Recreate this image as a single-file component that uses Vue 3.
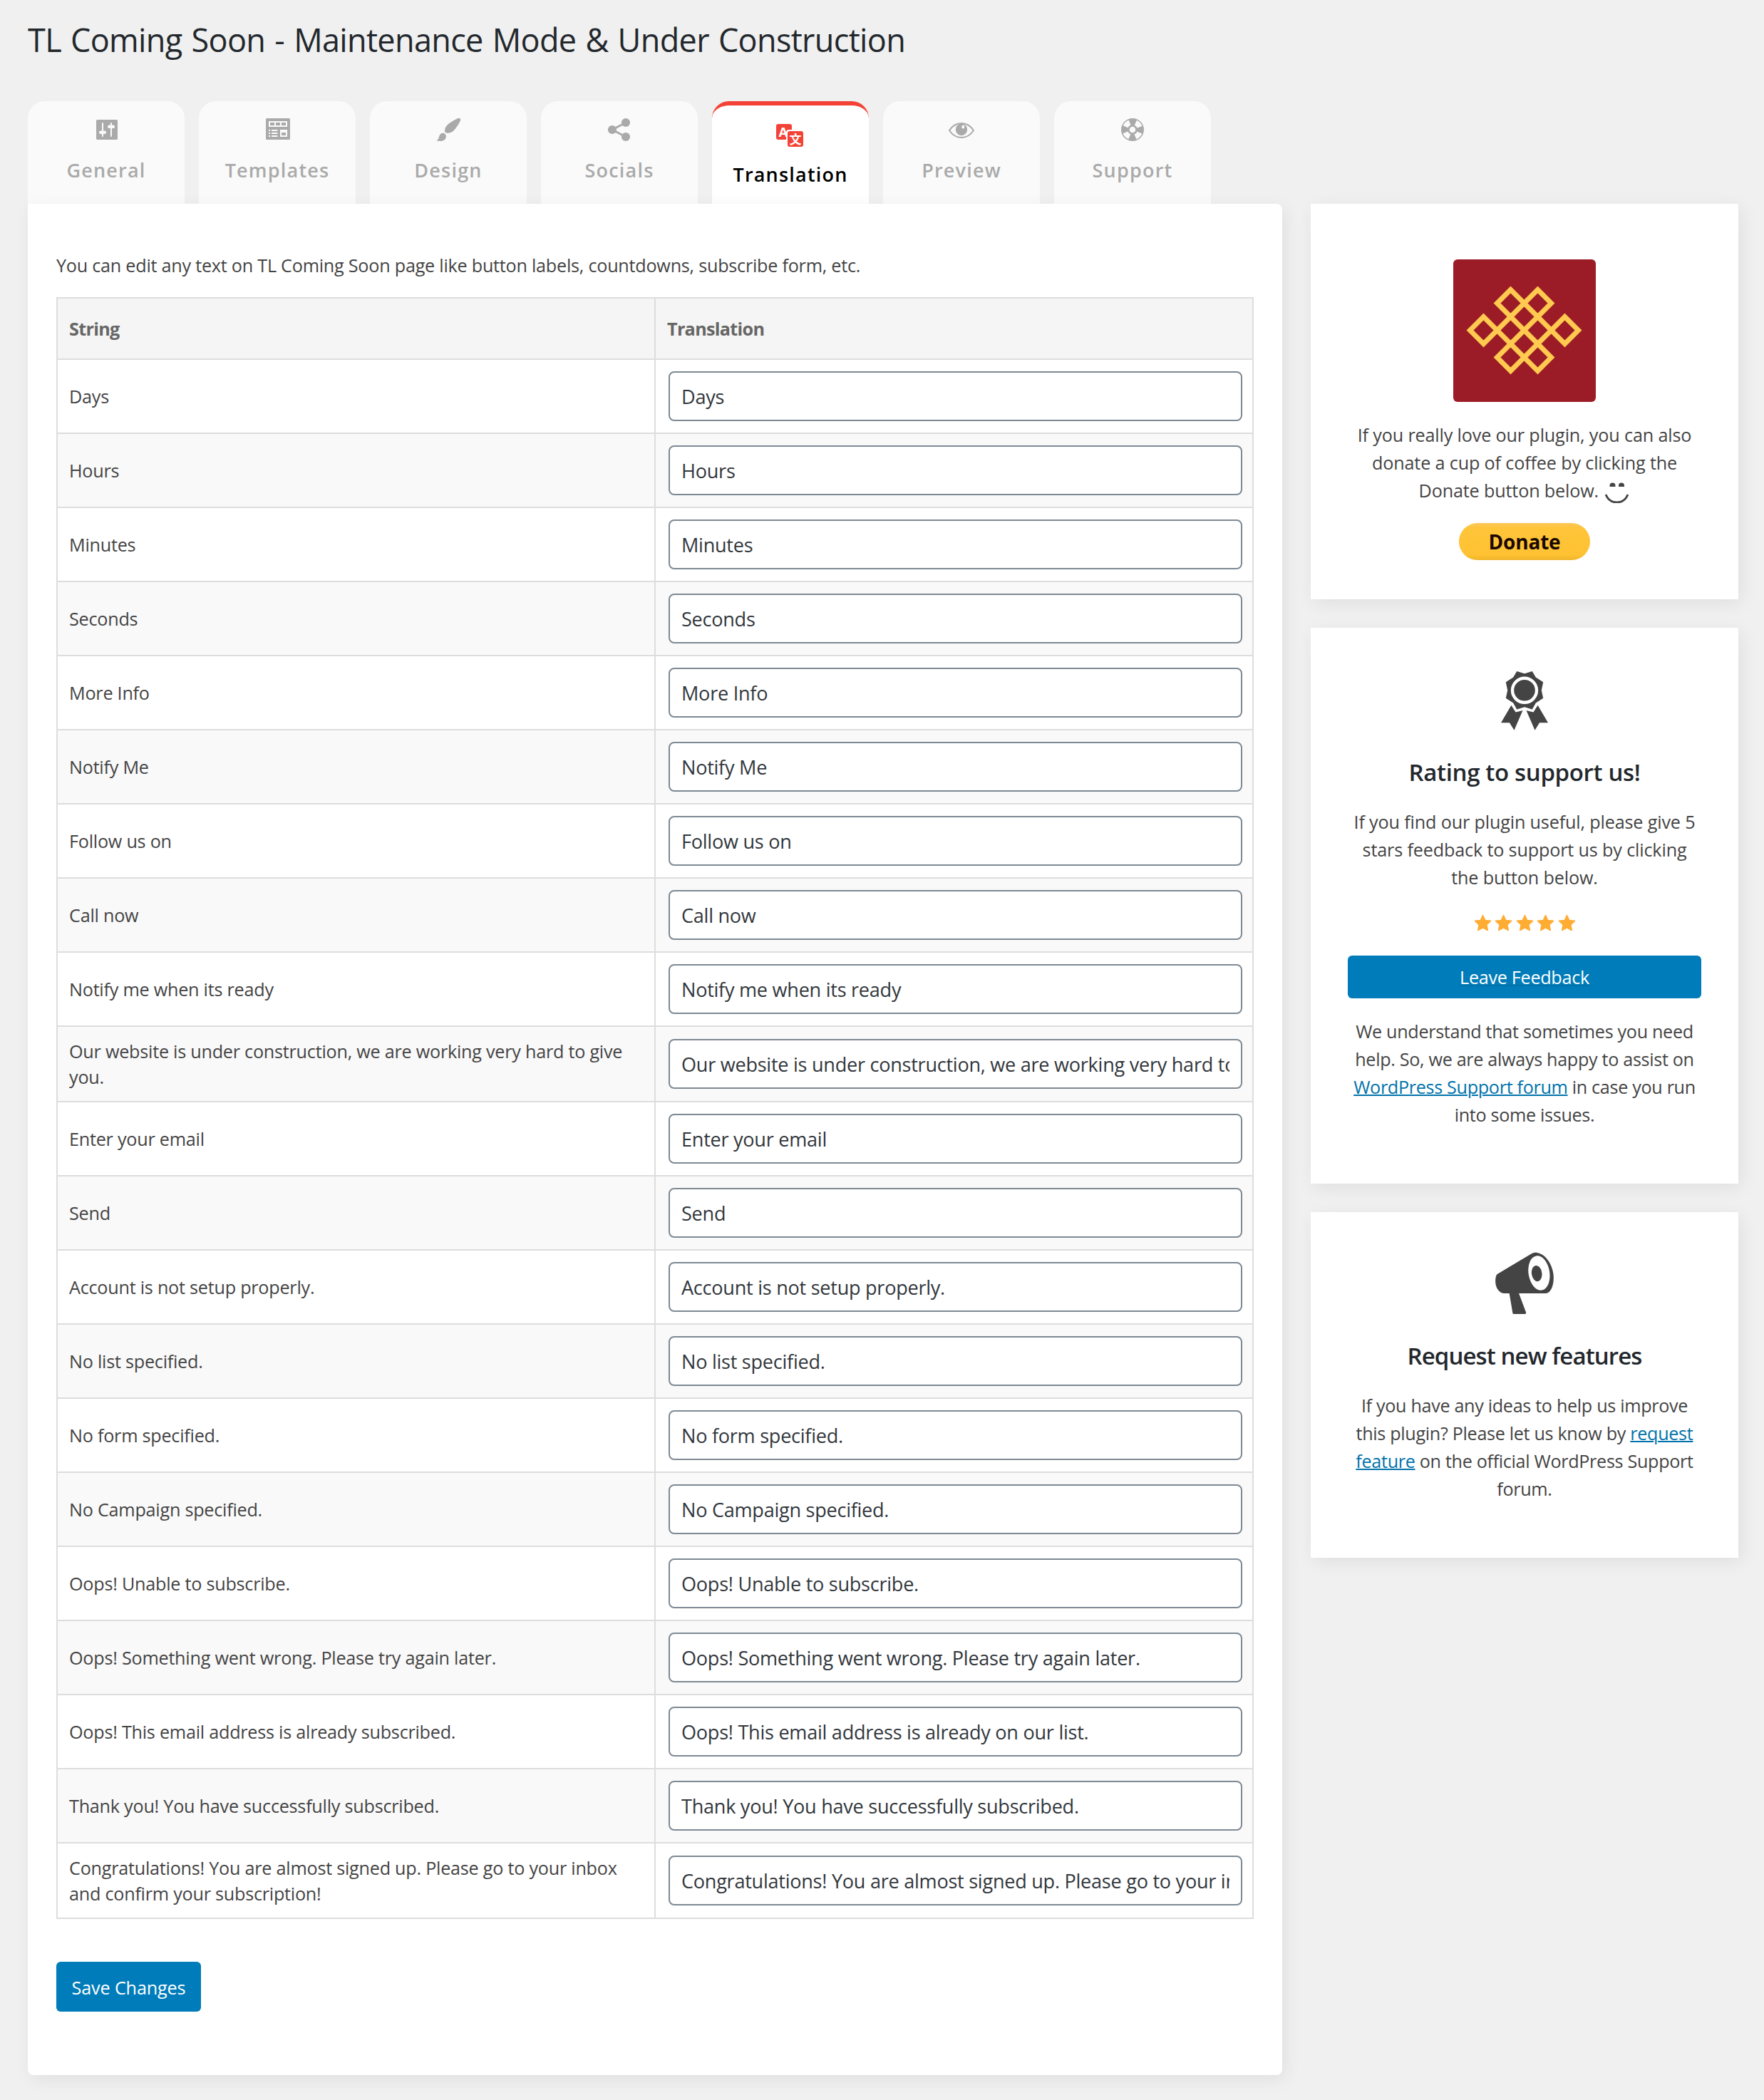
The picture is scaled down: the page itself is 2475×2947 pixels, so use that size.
<script setup>
const tabs = [
  { id: 'general', label: 'General' },
  { id: 'templates', label: 'Templates' },
  { id: 'design', label: 'Design' },
  { id: 'socials', label: 'Socials' },
  { id: 'translation', label: 'Translation' },
  { id: 'preview', label: 'Preview' },
  { id: 'support', label: 'Support' },
]
const active = 'translation'

const strings = [
  ['Days'],
  ['Hours'],
  ['Minutes'],
  ['Seconds'],
  ['More Info'],
  ['Notify Me'],
  ['Follow us on'],
  ['Call now'],
  ['Notify me when its ready'],
  ['Our website is under construction, we are working very hard to give you.'],
  ['Enter your email'],
  ['Send'],
  ['Account is not setup properly.'],
  ['No list specified.'],
  ['No form specified.'],
  ['No Campaign specified.'],
  ['Oops! Unable to subscribe.'],
  ['Oops! Something went wrong. Please try again later.'],
  ['Oops! This email address is already subscribed.', 'Oops! This email address is already on our list.'],
  ['Thank you! You have successfully subscribed.'],
  ['Congratulations! You are almost signed up. Please go to your inbox and confirm your subscription!'],
].map(([source, translation = source]) => ({ source, translation, tall: source.length > 60 }))

// Centres of the linked diamonds in the knot logo
const diamonds = [[-57, 0], [-19, 0], [19, 0], [57, 0], [-19, -38], [19, -38], [-19, 38], [19, 38]]
</script>

<template>
  <div class="page">
    <h1 class="title">TL Coming Soon - Maintenance Mode &amp; Under Construction</h1>

    <nav class="tabs">
      <a v-for="tab in tabs" :key="tab.id" class="tab" :class="{ active: tab.id === active }">
        <svg class="tab-icon" viewBox="0 0 40 40" fill="currentColor">
          <template v-if="tab.id === 'general'">
            <rect x="6" y="6" width="30" height="28" rx="1.5" />
            <g class="cut">
              <rect x="14" y="10" width="2" height="20" rx="1" />
              <rect x="10" y="21.6" width="10" height="4.4" rx="2.2" />
              <rect x="26" y="10" width="2" height="20" rx="1" />
              <rect x="22" y="13.6" width="10" height="4.4" rx="2.2" />
            </g>
          </template>
          <template v-else-if="tab.id === 'templates'">
            <rect x="4" y="4" width="34" height="30" rx="1.5" />
            <g class="cut">
              <rect x="8" y="8" width="26" height="8" />
              <rect x="8" y="20" width="2" height="2" />
              <rect x="8" y="24" width="2" height="2" />
              <rect x="8" y="28" width="2" height="2" />
              <rect x="12" y="20" width="8.4" height="2" />
              <rect x="12" y="24" width="8.4" height="2" />
              <rect x="12" y="28" width="8.4" height="2" />
              <rect x="24" y="20" width="10" height="10" />
            </g>
            <rect x="10" y="10" width="6" height="4" />
            <rect x="18" y="10" width="6" height="4" />
            <rect x="26" y="10" width="6" height="4" />
            <rect x="26" y="24" width="6" height="4" />
          </template>
          <template v-else-if="tab.id === 'design'">
            <path d="M36.6 4.4c1.2 1.2.4 3-.8 5-2 3.800-5 8.400-8 11.600-2.400 2.600-5.200 3.800-8.400 3.800-1.400 0-2.800-.2-3.600-1-.8-.8-.9-2-.7-3.400.4-3 2-5.800 4.400-7.800 3.400-3 8-5.600 12-7.600 2.200-1.200 4-1.600 5.100-.6z" />
            <path d="M3.200 35.600c2.400-1.200 3.200-3.200 3.800-5.600.8-3 2.400-5.300 5-5.300 3 0 5 2 4.900 5-.2 3.800-3.300 6.300-7.900 6.300-2.200 0-4.200 0-5.800-.4z" />
          </template>
          <template v-else-if="tab.id === 'socials'">
            <path d="M29 10 10 20l19 10" fill="none" stroke="currentColor" stroke-width="3" />
            <circle cx="10" cy="20" r="6.1" />
            <circle cx="29" cy="10" r="6.1" />
            <circle cx="29" cy="30" r="6.1" />
          </template>
          <template v-else-if="tab.id === 'translation'">
            <rect x="0" y="6" width="22" height="22" rx="3" />
            <text class="cut letter" x="3.400" y="23.800">A</text>
            <rect class="cut" x="14" y="14" width="26" height="26" rx="4" />
            <rect x="16" y="16" width="22" height="22" rx="3" />
            <text class="cut hanzi" x="18.500" y="34">文</text>
          </template>
          <template v-else-if="tab.id === 'preview'">
            <path d="M3 21c4.500-6.800 10-10 17-10s12.500 3.200 17 10c-4.500 6.800-10 10-17 10S7.500 27.800 3 21z" fill="none" stroke="currentColor" stroke-width="2" />
            <ellipse cx="20" cy="19.800" rx="8.200" ry="8.400" />
            <ellipse class="cut" cx="22.300" cy="16" rx="2" ry="2.600" />
          </template>
          <template v-else>
            <circle cx="20" cy="20" r="16" />
            <circle class="gaps" cx="20" cy="20" r="10.700" transform="rotate(22.5 20 20)" />
            <circle class="cut" cx="20" cy="20" r="4.300" />
          </template>
        </svg>
        <span>{{ tab.label }}</span>
      </a>
    </nav>

    <div class="columns">
      <main class="panel">
        <p class="intro">You can edit any text on TL Coming Soon page like button labels, countdowns, subscribe form, etc.</p>
        <table class="strings">
          <thead>
            <tr>
              <th>String</th>
              <th>Translation</th>
            </tr>
          </thead>
          <tbody>
            <tr v-for="row in strings" :key="row.source" :class="{ tall: row.tall }">
              <td>{{ row.source }}</td>
              <td><input type="text" :value="row.translation" /></td>
            </tr>
          </tbody>
        </table>
        <button class="save">Save Changes</button>
      </main>

      <aside class="sidebar">
        <section class="card donate-card">
          <svg class="logo" viewBox="0 0 200 200">
            <rect width="200" height="200" fill="#9b1c27" />
            <g transform="translate(99.500 99.500)" fill="none" stroke="#ffca4f" stroke-width="7">
              <path v-for="([x, y], i) in diamonds" :key="i" :d="`M${x - 19} ${y}l19-19 19 19-19 19z`" />
            </g>
          </svg>
          <p>
            If you really love our plugin, you can also donate a cup of coffee by clicking the Donate button below.
            <svg class="smile" viewBox="0 0 36 30">
              <path d="M7.500 7v-1.500a4 4 0 0 1 8 0V7zM20 7v-1.500a4 4 0 0 1 8 0V7z" fill="#444" />
              <path d="M2 18c3 7.500 9 11 15.500 11S30 25.500 33 18" fill="none" stroke="#444" stroke-width="2.800" />
            </svg>
          </p>
          <button class="donate">Donate</button>
        </section>

        <section class="card rating-card">
          <svg class="card-icon" viewBox="0 0 96 96" fill="#444">
            <path d="M37.200 11.100 48 14.300l10.800-3.200 5 8.400 10.400 6.800-2.400 11.500 2.400 11-10.400 6.800-5 8.900L48 61.300l-10.800 3.200-5-8.900-10.400-6.800 2.400-11-2.400-11.500 10.400-6.800z" />
            <circle cx="48" cy="37.800" r="17" fill="none" stroke="#fff" stroke-width="4.400" />
            <path d="M29.400 58.700l6.200 9.900 9.900-2.600-12 27.700-6.500-10.400H15zM66.600 58.700l-6.200 9.900-9.900-2.600 12 27.700 6.500-10.400h12z" />
          </svg>
          <h2>Rating to support us!</h2>
          <p>If you find our plugin useful, please give 5 stars feedback to support us by clicking the button below.</p>
          <div class="stars">
            <svg v-for="n in 5" :key="n" viewBox="0 0 25 25">
              <path d="M12.500 1.500l3.200 7 7.800.9-5.700 5.300 1.500 7.800-6.800-3.800-6.800 3.800 1.500-7.800L1.500 9.400l7.800-.9z" fill="#ffac33" stroke="#ffac33" stroke-width="1.600" stroke-linejoin="round" />
            </svg>
          </div>
          <a class="feedback"><span>Leave Feedback</span></a>
          <p class="snug">We understand that sometimes you need help. So, we are always happy to assist on <a class="link">WordPress Support forum</a> in case you run into some issues.</p>
        </section>

        <section class="card request-card">
          <svg class="card-icon" viewBox="0 0 96 96" fill="#444">
            <path d="M57.500 8.500C60 7 62 6.500 65 6.800 77 8.500 86.500 22 88.500 37c1.500 13-2.500 25.500-10 27.100H20C12.500 64.100 7.200 56 7.200 47.500c0-4 .2-8 2.200-10.300z" />
            <ellipse cx="68.400" cy="35.500" rx="14.800" ry="24.400" transform="rotate(-9 68.400 35.500)" fill="#fff" />
            <ellipse cx="65.200" cy="36.100" rx="7.200" ry="11.200" transform="rotate(-7 65.200 36.100)" />
            <path d="M26.500 63h13.200L50 90.600c.4 1.400 0 2.400-1.400 2.400H32.800c-.8 0-1.300-.4-1.400-1.300z" />
          </svg>
          <h2 class="tight">Request new features</h2>
          <p class="snug">If you have any ideas to help us improve this plugin? Please let us know by <a class="link">request feature</a> on the official WordPress Support forum.</p>
        </section>
      </aside>
    </div>
  </div>
</template>

<style>
body {
  background: #f0f0f0;
}
</style>

<style scoped>
* {
  box-sizing: border-box;
}
.page {
  min-height: 2947px;
  padding: 26px 36px 0 39px;
  font: 400 25.2px/39px "Open Sans", "Noto Sans", sans-serif;
  letter-spacing: -0.24px;
  color: #444;
}
.title {
  margin: 0 0 56px;
  font-size: 45px;
  line-height: 60px;
  font-weight: 400;
  letter-spacing: -0.66px;
  word-spacing: 2px;
  color: #23282d;
}
.tabs {
  display: flex;
  gap: 20px;
}
.tab {
  width: 220px;
  height: 144px;
  padding-top: 20px;
  border-radius: 24px 24px 0 0;
  background: #fafafa;
  color: #aaa;
  --cut: #fafafa;
  display: flex;
  flex-direction: column;
  align-items: center;
  gap: 17px;
  font-size: 27px;
  line-height: 40px;
  font-weight: 600;
  letter-spacing: 1.2px;
}
.tab.active {
  border-top: 6px solid #f44336;
  background: #fff;
  color: #000;
  --cut: #fff;
}
.tab-icon {
  width: 40px;
  height: 40px;
}
.active .tab-icon {
  color: #f44336;
}
.cut {
  fill: var(--cut);
}
.gaps {
  fill: none;
  stroke: var(--cut);
  stroke-width: 7.5;
  stroke-dasharray: 8.4 8.4;
}
.letter {
  font: 700 18.5px "Open Sans", sans-serif;
  letter-spacing: 0;
}
.hanzi {
  font: 700 17px "Noto Sans CJK SC", sans-serif;
  letter-spacing: 0;
}
.columns {
  display: flex;
  align-items: flex-start;
  gap: 40px;
}
.panel {
  width: 1760px;
  height: 2626px;
  padding: 67px 40px 0;
  border-radius: 0 8px 8px 8px;
  background: #fff;
  box-shadow: 4px 6px 24px rgba(0, 0, 0, 0.07);
}
.intro {
  margin: 0 0 25px;
}
.strings {
  width: 1680px;
  table-layout: fixed;
  border-collapse: collapse;
  line-height: 36px;
}
th,
td {
  padding: 0 16px;
  border: 2px solid #ddd;
  text-align: left;
  vertical-align: middle;
}
th {
  height: 86px;
  background: #f5f5f5;
  color: #666;
  font-weight: 700;
  letter-spacing: -0.7px;
}
tbody tr {
  height: 104px;
}
tbody tr.tall {
  height: 106px;
}
tbody tr:nth-child(even) {
  background: #f9f9f9;
}
input {
  display: block;
  width: 805px;
  height: 70px;
  margin: 0 0 0 2px;
  padding: 0 16px;
  border: 2px solid #7e8993;
  border-radius: 8px;
  background: #fff;
  color: #32373c;
  font: 400 27.1px/56px "Open Sans", "Noto Sans", sans-serif;
  letter-spacing: -0.27px;
}
button {
  display: block;
  border: 0;
  padding: 0;
  font-family: inherit;
}
.save {
  width: 203px;
  height: 70px;
  margin-top: 60px;
  padding-top: 1px;
  border-radius: 6px;
  background: #007cba;
  color: #fff;
  font-size: 25.2px;
  letter-spacing: -0.15px;
}
.sidebar {
  width: 600px;
  display: flex;
  flex-direction: column;
  gap: 40px;
}
.card {
  padding: 50px 52px 0;
  background: #fff;
  box-shadow: 4px 6px 24px rgba(0, 0, 0, 0.07);
  display: flex;
  flex-direction: column;
  align-items: center;
  text-align: center;
  letter-spacing: -0.16px;
}
.card p {
  margin: 0;
}
.card .snug {
  letter-spacing: -0.33px;
}
.donate-card {
  height: 555px;
  padding-top: 78px;
}
.rating-card {
  height: 780px;
}
.request-card {
  height: 485px;
}
.logo {
  width: 200px;
  height: 200px;
  margin-bottom: 27px;
  border-radius: 6px;
}
.smile {
  width: 36px;
  height: 30px;
  margin-left: 2px;
  vertical-align: -8px;
}
.donate {
  width: 184px;
  height: 52px;
  margin-top: 26px;
  border-radius: 26px;
  background: linear-gradient(#fdc75a, #ffc439 14%, #ffc233 85%, #f0b429);
  color: #1a0800;
  font-size: 28px;
  font-weight: 700;
  letter-spacing: -0.2px;
  line-height: 52px;
}
.card-icon {
  width: 96px;
  height: 96px;
  flex: none;
}
h2 {
  margin: 35px 0 28px;
  font-size: 33px;
  line-height: 44px;
  font-weight: 600;
  letter-spacing: -0.35px;
  color: #23282d;
}
h2.tight {
  margin-top: 34px;
  letter-spacing: -0.92px;
}
.stars {
  display: flex;
  gap: 4.5px;
  margin: 32px 0 33px;
}
.stars svg {
  width: 25px;
  height: 25px;
}
.feedback {
  width: 496px;
  height: 60px;
  margin-bottom: 27px;
  border-radius: 6px;
  background: #007cba;
  color: #fff;
  line-height: 61px;
  letter-spacing: -0.3px;
}
.feedback span {
  text-decoration: underline #0073aa 2px;
}
.link {
  color: #0073aa;
  text-decoration: underline;
  text-decoration-thickness: 2px;
}
</style>
